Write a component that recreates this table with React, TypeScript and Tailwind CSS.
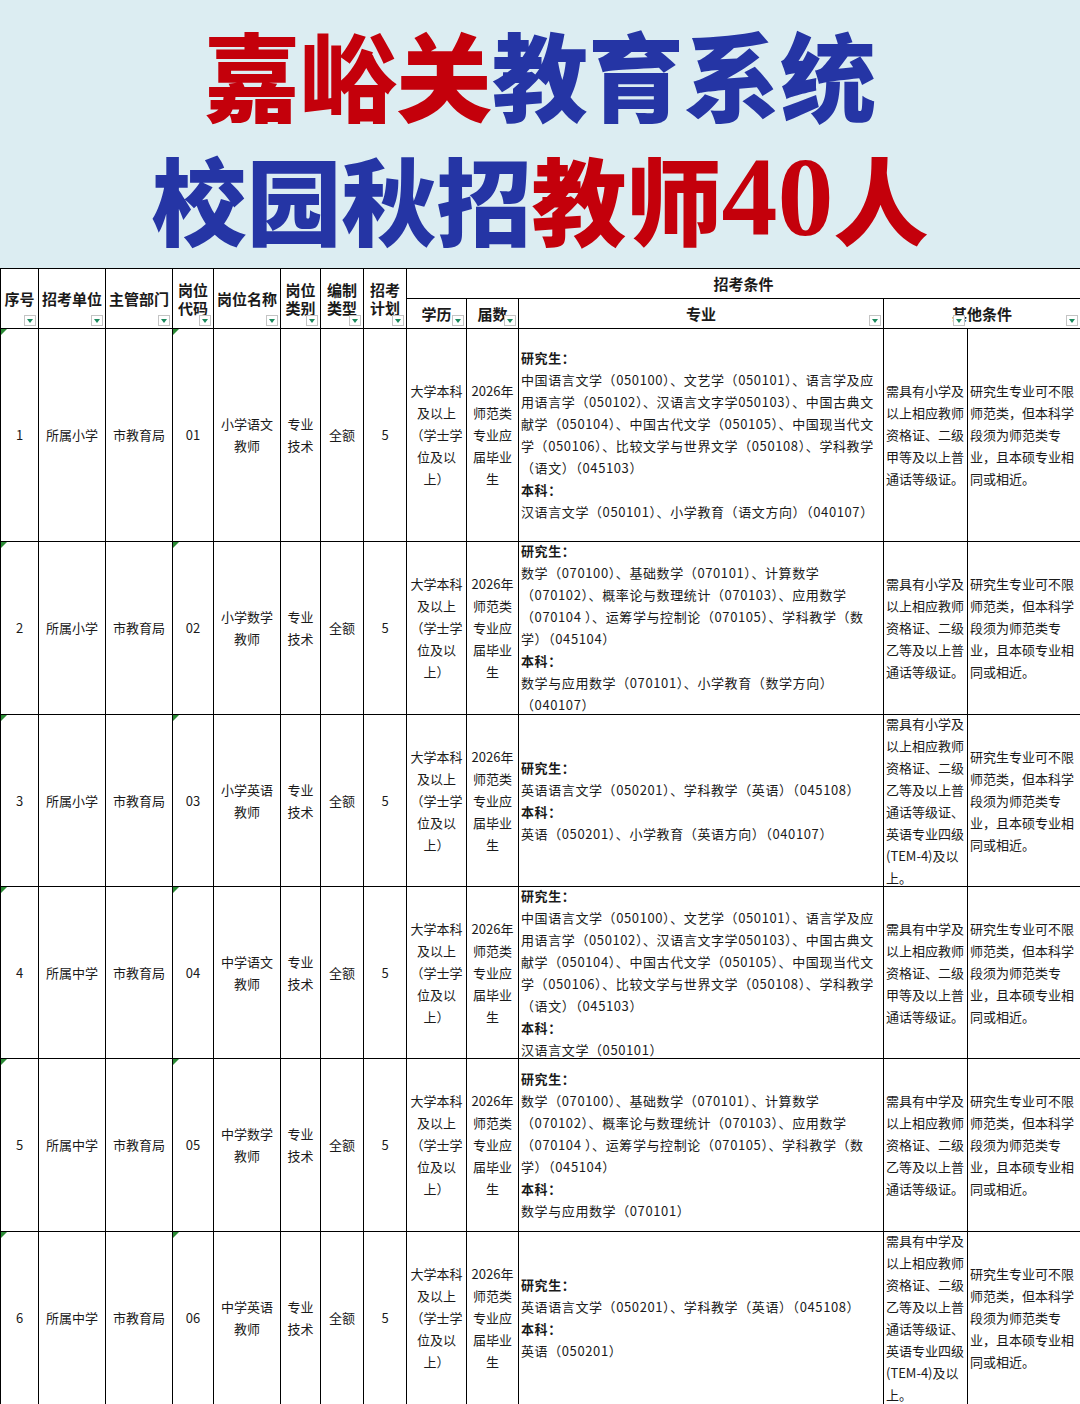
import React from "react";

type Row = {
  no: string;
  unit: string;
  code: string;
  name: string[];
  h: string;
  major: { t: string; b?: boolean }[];
  other1: string[];
};

const EDU = ["大学本科", "及以上", "（学士学", "位及以", "上）"];
const GRAD = ["2026年", "师范类", "专业应", "届毕业", "生"];
const OTHER2 = ["研究生专业可不限", "师范类，但本科学", "段须为师范类专", "业，且本硕专业相", "同或相近。"];

const CHINESE_GRAD = [
  "中国语言文学（050100）、文艺学（050101）、语言学及应",
  "用语言学（050102）、汉语言文字学050103）、中国古典文",
  "献学（050104）、中国古代文学（050105）、中国现当代文",
  "学（050106）、比较文学与世界文学（050108）、学科教学",
  "（语文）（045103）",
];
const MATH_GRAD = [
  "数学（070100）、基础数学（070101）、计算数学",
  "（070102）、概率论与数理统计（070103）、应用数学",
  "（070104 ）、运筹学与控制论（070105）、学科教学（数",
  "学）（045104）",
];

const g = (lines: string[]) => lines.map((t) => ({ t }));
const B = (t: string) => ({ t, b: true });

const other = (level: string, grade: string, english: boolean) =>
  english
    ? [`需具有${level}及`, "以上相应教师", "资格证、二级", `${grade}等及以上普`, "通话等级证、", "英语专业四级", "(TEM-4)及以", "上。"]
    : [`需具有${level}及`, "以上相应教师", "资格证、二级", `${grade}等及以上普`, "通话等级证。"];

const ROWS: Row[] = [
  {
    no: "1",
    unit: "所属小学",
    code: "01",
    name: ["小学语文", "教师"],
    h: "h-[212px]",
    major: [B("研究生："), ...g(CHINESE_GRAD), B("本科："), { t: "汉语言文学（050101）、小学教育（语文方向）（040107）" }],
    other1: other("小学", "甲", false),
  },
  {
    no: "2",
    unit: "所属小学",
    code: "02",
    name: ["小学数学", "教师"],
    h: "h-[172px]",
    major: [B("研究生："), ...g(MATH_GRAD), B("本科："), { t: "数学与应用数学（070101）、小学教育（数学方向）" }, { t: "（040107）" }],
    other1: other("小学", "乙", false),
  },
  {
    no: "3",
    unit: "所属小学",
    code: "03",
    name: ["小学英语", "教师"],
    h: "h-[171px]",
    major: [B("研究生："), { t: "英语语言文学（050201）、学科教学（英语）（045108）" }, B("本科："), { t: "英语（050201）、小学教育（英语方向）（040107）" }],
    other1: other("小学", "乙", true),
  },
  {
    no: "4",
    unit: "所属中学",
    code: "04",
    name: ["中学语文", "教师"],
    h: "h-[171px]",
    major: [B("研究生："), ...g(CHINESE_GRAD), B("本科："), { t: "汉语言文学（050101）" }],
    other1: other("中学", "甲", false),
  },
  {
    no: "5",
    unit: "所属中学",
    code: "05",
    name: ["中学数学", "教师"],
    h: "h-[172px]",
    major: [B("研究生："), ...g(MATH_GRAD), B("本科："), { t: "数学与应用数学（070101）" }],
    other1: other("中学", "乙", false),
  },
  {
    no: "6",
    unit: "所属中学",
    code: "06",
    name: ["中学英语", "教师"],
    h: "h-[172px]",
    major: [B("研究生："), { t: "英语语言文学（050201）、学科教学（英语）（045108）" }, B("本科："), { t: "英语（050201）" }],
    other1: other("中学", "乙", true),
  },
];

const COLS = [38, 67, 67, 41, 67, 40, 43, 43, 60, 52, 365, 84, 113];

const FilterBtn = ({ className = "right-[2px]" }: { className?: string }) => (
  <div
    className={`absolute bottom-[2px] ${className} flex h-[11px] w-[12px] items-center justify-center border border-[#c4c4c4] bg-white`}
  >
    <div className="h-0 w-0 border-l-[3px] border-r-[3px] border-t-[4px] border-l-transparent border-r-transparent border-t-[#1d8a5e]" />
  </div>
);

const Flag = () => (
  <div className="absolute left-0 top-0 h-0 w-0 border-r-[6px] border-t-[6px] border-r-transparent border-t-[#2a8a34]" />
);

const HeadCell = ({ lines, rowSpan = 2, filter = true }: { lines: string[]; rowSpan?: number; filter?: boolean }) => (
  <th rowSpan={rowSpan} className="border border-black p-0 align-middle">
    <div className="relative flex h-[59px] flex-col items-center justify-center text-[15px] font-bold leading-[18px]">
      {lines.map((l) => (
        <div key={l} className="h-[18px] whitespace-nowrap leading-[18px]">
          {l}
        </div>
      ))}
      {filter && <FilterBtn />}
    </div>
  </th>
);

const Lines = ({ lines, h, flag }: { lines: string[]; h: string; flag?: boolean }) => (
  <td className="border border-black p-0 align-middle">
    <div className={`relative flex ${h} flex-col items-center justify-center overflow-hidden text-center`}>
      {lines.map((l, i) => (
        <div key={i} className="whitespace-nowrap">
          {l}
        </div>
      ))}
      {flag && <Flag />}
    </div>
  </td>
);

export default function App() {
  return (
    <div className="w-[1080px] bg-white font-['Noto_Sans_CJK_SC',sans-serif] text-[#1a1a1a]">
      <div className="flex h-[268px] flex-col items-center bg-[#dcedf2] pt-[20px]">
        <div className="flex h-[106px] items-center text-[96px] font-black leading-none">
          <span className="text-[#c4000b]">嘉峪关</span>
          <span className="text-[#2535a5]">教育系统</span>
        </div>
        <div className="mt-[18px] flex h-[106px] items-center text-[95px] font-black leading-none">
          <span className="text-[#2535a5]">校园秋招</span>
          <span className="text-[#c4000b]">教师</span>
          <span className="font-['Liberation_Serif',serif] text-[112px] font-bold text-[#c4000b]">40</span>
          <span className="text-[#c4000b]">人</span>
        </div>
      </div>
      <table className="w-[1080px] table-fixed border-collapse text-[13px] leading-[22px]">
        <colgroup>
          {COLS.map((w, i) => (
            <col key={i} style={{ width: w }} />
          ))}
        </colgroup>
        <thead>
          <tr>
            <HeadCell lines={["序号"]} />
            <HeadCell lines={["招考单位"]} />
            <HeadCell lines={["主管部门"]} />
            <HeadCell lines={["岗位", "代码"]} />
            <HeadCell lines={["岗位名称"]} />
            <HeadCell lines={["岗位", "类别"]} />
            <HeadCell lines={["编制", "类型"]} />
            <HeadCell lines={["招考", "计划"]} />
            <th colSpan={5} className="border border-black p-0">
              <div className="flex h-[29px] items-center justify-center text-[15px] font-bold">招考条件</div>
            </th>
          </tr>
          <tr>
            {["学历", "届数", "专业"].map((t) => (
              <th key={t} className="border border-black p-0">
                <div className="relative flex h-[29px] items-center justify-center text-[15px] font-bold">
                  {t}
                  <FilterBtn />
                </div>
              </th>
            ))}
            <th colSpan={2} className="border border-black p-0">
              <div className="relative flex h-[29px] items-center justify-center text-[15px] font-bold">
                <FilterBtn className="right-[115px]" />
                其他条件
                <FilterBtn />
              </div>
            </th>
          </tr>
        </thead>
        <tbody>
          {ROWS.map((r) => (
            <tr key={r.no}>
              <Lines lines={[r.no]} h={r.h} flag />
              <Lines lines={[r.unit]} h={r.h} />
              <Lines lines={["市教育局"]} h={r.h} />
              <Lines lines={[r.code]} h={r.h} flag />
              <Lines lines={r.name} h={r.h} />
              <Lines lines={["专业", "技术"]} h={r.h} />
              <Lines lines={["全额"]} h={r.h} />
              <Lines lines={["5"]} h={r.h} />
              <Lines lines={EDU} h={r.h} />
              <Lines lines={GRAD} h={r.h} />
              <td className="border border-black p-0 align-middle">
                <div className={`flex ${r.h} flex-col justify-center overflow-hidden pl-[2px] tracking-[0.6px]`}>
                  {r.major.map((m, i) => (
                    <div key={i} className={`whitespace-nowrap ${m.b ? "font-bold" : ""}`}>
                      {m.t}
                    </div>
                  ))}
                </div>
              </td>
              <td className="border border-black p-0 align-middle">
                <div className={`flex ${r.h} flex-col justify-center overflow-hidden pl-[2px]`}>
                  {r.other1.map((l, i) => (
                    <div key={i} className="whitespace-nowrap">
                      {l}
                    </div>
                  ))}
                </div>
              </td>
              <td className="border border-black p-0 align-middle">
                <div className={`flex ${r.h} flex-col justify-center overflow-hidden pl-[2px]`}>
                  {OTHER2.map((l, i) => (
                    <div key={i} className="whitespace-nowrap">
                      {l}
                    </div>
                  ))}
                </div>
              </td>
            </tr>
          ))}
        </tbody>
      </table>
    </div>
  );
}
